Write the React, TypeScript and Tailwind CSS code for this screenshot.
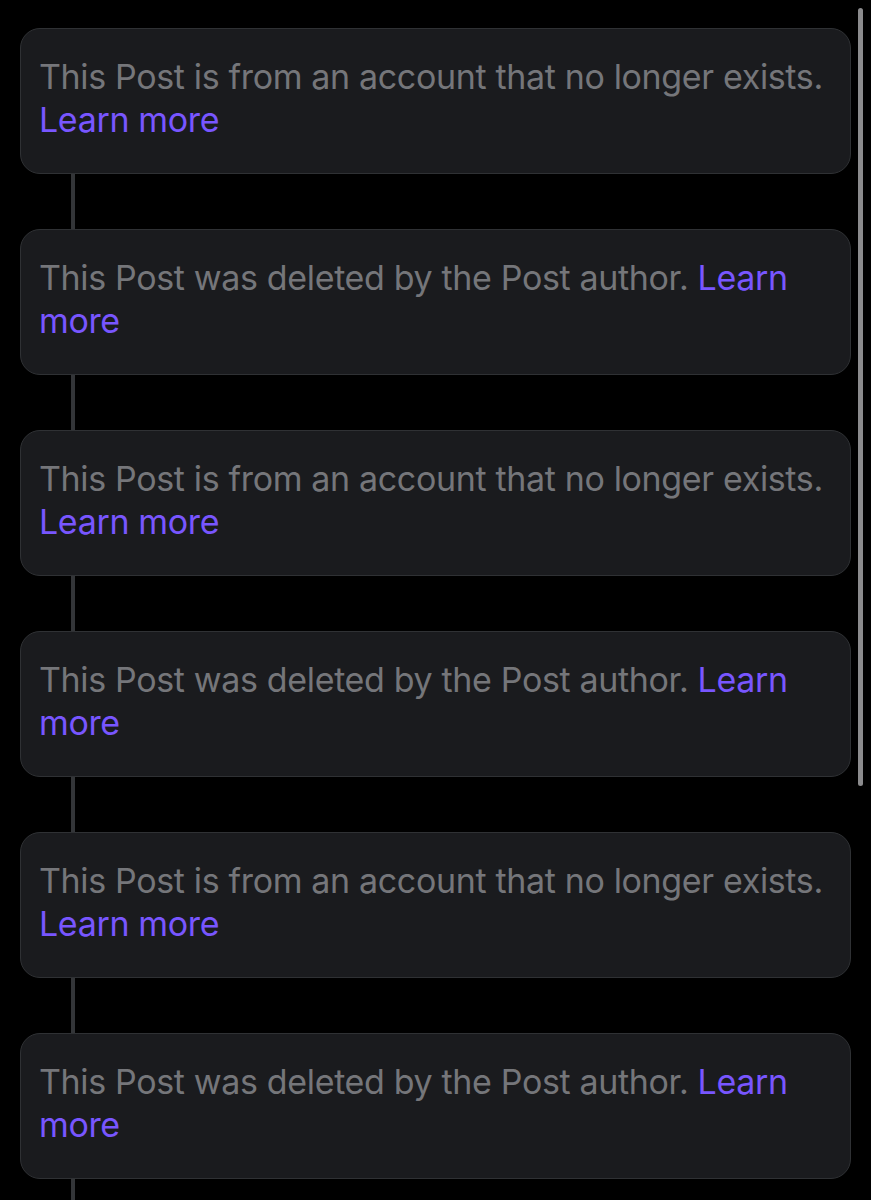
const posts = [
  { kind: "gone" },
  { kind: "deleted" },
  { kind: "gone" },
  { kind: "deleted" },
  { kind: "gone" },
  { kind: "deleted" },
] as const;

function Tombstone({ kind }: { kind: "gone" | "deleted" }) {
  const msg =
    kind === "gone"
      ? "This Post is from an account that no longer exists."
      : "This Post was deleted by the Post author.";
  return (
    <div className="rounded-[20px] border border-[#2f3134] bg-[#1a1b1e] pl-[18px] pr-[12px] pt-[26px] pb-[32px] text-[34px] leading-[43px] tracking-[-0.35px] text-[#75767a]">
      {msg} <span className="text-[#7856ff]">Learn more</span>
    </div>
  );
}

export default function App() {
  return (
    <div className="relative h-[1200px] w-[871px] overflow-hidden bg-black" style={{ fontFamily: "Inter, 'Noto Sans', sans-serif" }}>
      <div className="flex flex-col pl-[20px] pr-[20px] pt-[28px]">
        {posts.map((p, i) => (
          <div key={i} className="flex flex-col">
            <Tombstone kind={p.kind} />
            {/* thread connector */}
            <div className="ml-[51px] h-[55px] w-[4px] bg-[#333538]" />
          </div>
        ))}
      </div>
      {/* scroll indicator */}
      <div className="absolute right-[8px] top-[8px] h-[778px] w-[5px] rounded-full bg-[#8b8b8d]" />
    </div>
  );
}
